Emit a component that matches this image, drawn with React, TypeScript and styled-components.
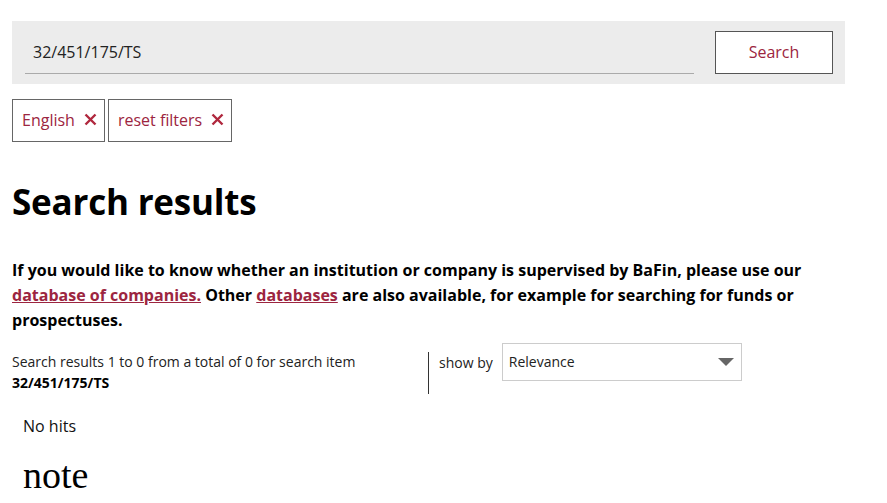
import React from "react";
import styled, { createGlobalStyle } from "styled-components";

const Global = createGlobalStyle`
  html, body { margin: 0; padding: 0; background: #fff; }
  body { font-family: "Open Sans", "Noto Sans", sans-serif; color: #000; }
  * { box-sizing: border-box; }
`;

const Page = styled.div`
  width: 833px;
  margin-left: 12px;
  padding-top: 21px;
`;

const SearchBar = styled.form`
  display: flex;
  align-items: flex-start;
  height: 63px;
  background: #ececec;
  padding: 10px 12px 0 13px;
  gap: 21px;
`;

const InputWrap = styled.div`
  flex: 1;
  height: 43px;
  border-bottom: 1px solid #aaa;
  display: flex;
  align-items: center;
  padding-left: 8px;
  padding-bottom: 1px;
  font-size: 16px;
  color: #222;
`;

const SearchButton = styled.button`
  width: 118px;
  height: 43px;
  background: #fff;
  border: 1px solid #555;
  color: #9c2540;
  font-family: inherit;
  font-size: 16px;
  padding: 0 0 2px;
`;

const Filters = styled.div`
  display: flex;
  gap: 3px;
  margin-top: 15px;
`;

const Chip = styled.button`
  height: 43px;
  display: flex;
  align-items: center;
  gap: 9px;
  padding: 0 7px 2px 9px;
  background: #fff;
  border: 1px solid #666;
  color: #9c2540;
  font-family: inherit;
  font-size: 16px;
`;

const Heading = styled.h1`
  margin: 35px 0 0;
  font-size: 35px;
  font-weight: 700;
  line-height: 50px;
  letter-spacing: -0.2px;
`;

const Intro = styled.p`
  margin: 31px 0 0;
  font-size: 16px;
  font-weight: 700;
  line-height: 25px;
  width: 810px;
`;

const Link = styled.a`
  color: #9c2540;
  text-decoration: underline;
`;

const ResultRow = styled.div`
  display: flex;
  align-items: flex-start;
  margin-top: 10px;
`;

const Summary = styled.div`
  width: 416px;
  font-size: 14px;
  line-height: 21px;
  padding-top: 8px;
  color: #222;
  strong { color: #000; }
`;

const SortBox = styled.div`
  display: flex;
  align-items: flex-start;
  border-left: 1px solid #333;
  margin-top: 9px;
  height: 42px;
  padding-left: 10px;
  gap: 9px;
`;

const SortLabel = styled.span`
  font-size: 14px;
  line-height: 20px;
  margin-top: 1px;
  color: #222;
`;

const Select = styled.div`
  width: 240px;
  height: 38px;
  margin-top: -9px;
  border: 1px solid #ccc;
  display: flex;
  align-items: center;
  justify-content: space-between;
  padding: 0 6px 2px 6px;
  font-size: 14px;
  color: #222;
`;

const Arrow = styled.span`
  width: 0;
  height: 0;
  border-left: 8px solid transparent;
  border-right: 8px solid transparent;
  border-top: 8px solid #666;
  margin-right: 1px;
  margin-top: 2px;
`;

const NoHits = styled.p`
  margin: 20px 0 0 11px;
  font-size: 16px;
  line-height: 24px;
  color: #111;
`;

const Note = styled.h2`
  margin: 15px 0 0 11px;
  font-family: "Liberation Serif", "DejaVu Serif", serif;
  font-weight: 400;
  font-size: 38px;
  line-height: 44px;
`;

const XIcon = () => (
  <svg width="13" height="13" viewBox="0 0 13 13">
    <path d="M1.5 1.5 L11.5 11.5 M11.5 1.5 L1.5 11.5" stroke="#b0283e" strokeWidth="2.4" strokeLinecap="butt" />
  </svg>
);

export default function App() {
  return (
    <>
      <Global />
      <Page>
        <SearchBar onSubmit={(e) => e.preventDefault()}>
          <InputWrap>32/451/175/TS</InputWrap>
          <SearchButton type="submit">Search</SearchButton>
        </SearchBar>
        <Filters>
          <Chip>English <XIcon /></Chip>
          <Chip>reset filters <XIcon /></Chip>
        </Filters>
        <Heading>Search results</Heading>
        <Intro>
          If you would like to know whether an institution or company is supervised by BaFin, please use our{" "}
          <Link href="#">database of companies.</Link> Other <Link href="#">databases</Link> are also available, for example for searching for funds or prospectuses.
        </Intro>
        <ResultRow>
          <Summary>
            Search results 1 to 0 from a total of 0 for search item
            <br />
            <strong>32/451/175/TS</strong>
          </Summary>
          <SortBox>
            <SortLabel>show by</SortLabel>
            <Select>
              Relevance
              <Arrow />
            </Select>
          </SortBox>
        </ResultRow>
        <NoHits>No hits</NoHits>
        <Note>note</Note>
      </Page>
    </>
  );
}
